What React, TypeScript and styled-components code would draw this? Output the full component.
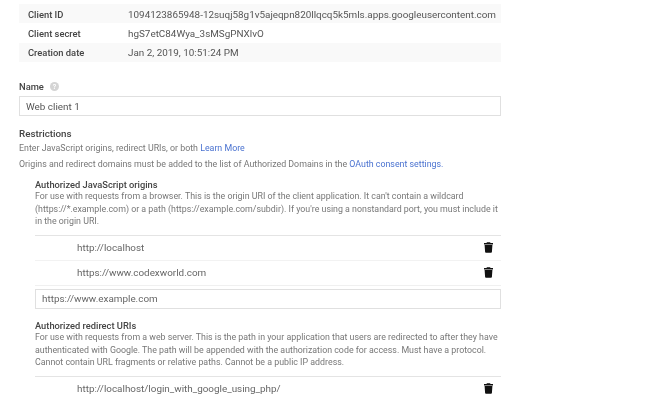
import { createGlobalStyle } from 'styled-components';
import styled from 'styled-components';

const GlobalStyle = createGlobalStyle`
  html, body {
    margin: 0;
    height: 400px;
    overflow: hidden;
    background: #fff;
    font-family: Roboto, "Liberation Sans", sans-serif;
  }
`;

const Page = styled.div`
  width: 482px;
  height: 396px;
  overflow: hidden;
  padding: 4px 0 0 19px;
  filter: blur(0.45px);
`;

const InfoTable = styled.div`
  display: flex;
  flex-direction: column;
  margin-bottom: 18px;
`;

const InfoRow = styled.div<{ $shaded?: boolean }>`
  display: flex;
  align-items: center;
  height: 19.4px;
  padding: 1px 0 0 9px;
  box-sizing: border-box;
  background: ${(p) => (p.$shaded ? '#f9f9f9' : 'transparent')};
`;

const InfoLabel = styled.span`
  width: 100px;
  flex-shrink: 0;
  font-size: 9.4px;
  color: #444;
  font-weight: 500;
`;

const InfoValue = styled.span`
  color: #555;
  font-size: 9.9px;
  white-space: nowrap;
`;

const FieldLabel = styled.div`
  display: flex;
  align-items: center;
  gap: 6px;
  height: 13px;
  font-size: 9.4px;
  font-weight: 500;
  color: #444;
  margin-bottom: 3px;
`;

const HelpIcon = styled.span`
  width: 9px;
  height: 9px;
  border-radius: 50%;
  background: #d4d4d4;
  color: #fff;
  font-size: 7px;
  font-weight: 700;
  display: flex;
  align-items: center;
  justify-content: center;
`;

const TextBox = styled.div<{ $muted?: boolean }>`
  display: flex;
  align-items: center;
  height: 18px;
  padding-left: 6px;
  border: 1px solid #e0e0e0;
  font-size: 9.9px;
  color: ${(p) => (p.$muted ? '#666' : '#555')};
`;

const SectionTitle = styled.div`
  margin-top: 11px;
  height: 13px;
  line-height: 13px;
  font-size: 9.8px;
  font-weight: 500;
  color: #444;
`;

const Hint = styled.div`
  font-size: 8.83px;
  line-height: 16px;
  color: #777;
  white-space: nowrap;
`;

const Link = styled.span`
  color: #4a72d0;
`;

const Nested = styled.div`
  margin: 6.5px 0 0 16px;
  display: flex;
  flex-direction: column;
`;

const SubTitle = styled.div<{ $gap?: number }>`
  margin-top: ${(p) => p.$gap ?? 0}px;
  font-size: 9.3px;
  line-height: 11.5px;
  font-weight: 500;
  color: #444;
`;

const Description = styled.div`
  font-size: 8.83px;
  line-height: 12.5px;
  color: #777;
  white-space: nowrap;
  margin-bottom: 7px;
`;

const UriRow = styled.div<{ $strong?: boolean }>`
  display: flex;
  align-items: center;
  justify-content: space-between;
  height: 24px;
  padding: 0 8px 0 42px;
  border-top: 1px solid ${(p) => (p.$strong ? '#e4e4e4' : '#f2f2f2')};
  font-size: 9.9px;
  color: #666;
`;

const RowsEnd = styled.div`
  border-top: 1px solid #f0f0f0;
  margin-bottom: 3px;
`;

function TrashIcon() {
  return (
    <svg width="9" height="11" viewBox="0 0 9 11" fill="#111">
      <path d="M3 .3h3l.6.8H9v1.3H0V1.1h2.4z" />
      <path d="M.6 3h7.8l-.5 7c0 .4-.4.8-.9.8H2c-.5 0-.9-.4-.9-.8z" />
    </svg>
  );
}

export default function App() {
  return (
    <Page>
      <GlobalStyle />
      <InfoTable>
        <InfoRow $shaded>
          <InfoLabel>Client ID</InfoLabel>
          <InfoValue>1094123865948-12suqj58g1v5ajeqpn820llqcq5k5mls.apps.googleusercontent.com</InfoValue>
        </InfoRow>
        <InfoRow>
          <InfoLabel>Client secret</InfoLabel>
          <InfoValue>hgS7etC84Wya_3sMSgPNXlvO</InfoValue>
        </InfoRow>
        <InfoRow $shaded>
          <InfoLabel>Creation date</InfoLabel>
          <InfoValue>Jan 2, 2019, 10:51:24 PM</InfoValue>
        </InfoRow>
      </InfoTable>

      <FieldLabel>
        Name <HelpIcon>?</HelpIcon>
      </FieldLabel>
      <TextBox>Web client 1</TextBox>

      <SectionTitle>Restrictions</SectionTitle>
      <Hint>
        Enter JavaScript origins, redirect URIs, or both <Link>Learn More</Link>
      </Hint>
      <Hint>
        Origins and redirect domains must be added to the list of Authorized Domains in the{' '}
        <Link>OAuth consent settings.</Link>
      </Hint>

      <Nested>
        <SubTitle>Authorized JavaScript origins</SubTitle>
        <Description>
          For use with requests from a browser. This is the origin URI of the client application. It can't contain a wildcard
          <br />
          (https://*.example.com) or a path (https://example.com/subdir). If you're using a nonstandard port, you must include it
          <br />
          in the origin URI.
        </Description>
        <UriRow $strong>
          http://localhost
          <TrashIcon />
        </UriRow>
        <UriRow>
          https://www.codexworld.com
          <TrashIcon />
        </UriRow>
        <RowsEnd />
        <TextBox $muted>https://www.example.com</TextBox>

        <SubTitle $gap={11}>Authorized redirect URIs</SubTitle>
        <Description>
          For use with requests from a web server. This is the path in your application that users are redirected to after they have
          <br />
          authenticated with Google. The path will be appended with the authorization code for access. Must have a protocol.
          <br />
          Cannot contain URL fragments or relative paths. Cannot be a public IP address.
        </Description>
        <UriRow $strong>
          http://localhost/login_with_google_using_php/
          <TrashIcon />
        </UriRow>
      </Nested>
    </Page>
  );
}
